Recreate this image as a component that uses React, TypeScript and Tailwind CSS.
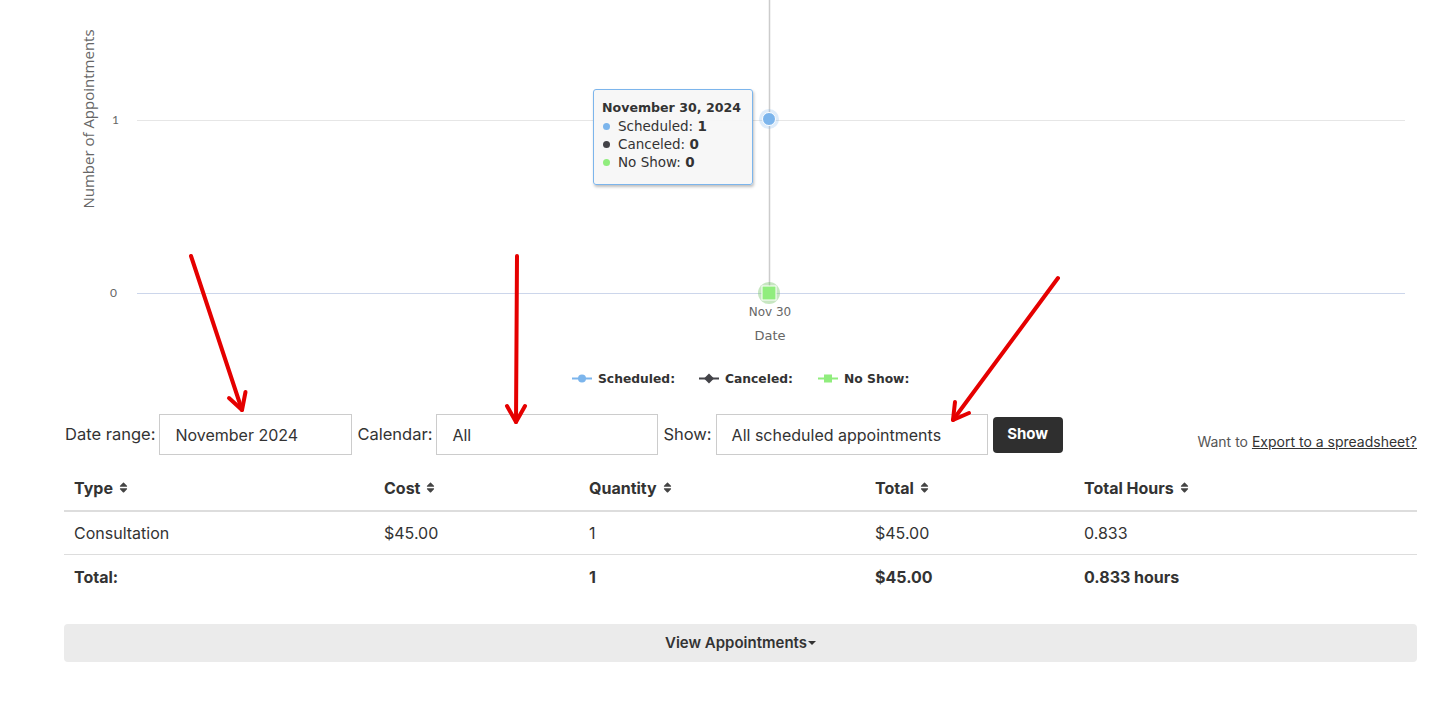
import { FaSort } from 'react-icons/fa';

const chartFont = { fontFamily: '"DejaVu Sans", sans-serif' };

function SortHead({ label }: { label: string }) {
  return (
    <span className="inline-flex items-center gap-[4px]">
      {label}
      <FaSort className="w-[13px] h-[13px] text-[#444]" />
    </span>
  );
}

function Chart() {
  return (
    <div className="relative h-[414px]">
      <svg width="1438" height="414" className="block">
        {/* grid */}
        <line x1="137" y1="120.5" x2="1405" y2="120.5" stroke="#e6e6e6" strokeWidth="1" />
        <line x1="137" y1="293.5" x2="1405" y2="293.5" stroke="#ccd6eb" strokeWidth="1" />
        {/* crosshair */}
        <line x1="769.5" y1="0" x2="769.5" y2="293" stroke="#cccccc" strokeWidth="1.5" />

        {/* y axis */}
        <text x="112" y="124" fontSize="12" fill="#666" fontFamily="Lato, sans-serif">1</text>
        <text x="110" y="297" fontSize="12" fill="#666" fontFamily="Lato, sans-serif">0</text>
        <text
          x="90"
          y="119"
          transform="rotate(-90 90 119)"
          textAnchor="middle"
          dominantBaseline="middle"
          fontSize="15"
          fill="#666"
          fontFamily='"Open Sans", sans-serif'
        >
          Number of Appointments
        </text>

        {/* points */}
        <circle cx="769" cy="119" r="10" fill="#7cb5ec" fillOpacity="0.25" />
        <circle cx="769" cy="119" r="6.5" fill="#7cb5ec" stroke="#fff" strokeWidth="1" />
        <circle cx="769" cy="293" r="11" fill="#90ed7d" fillOpacity="0.3" />
        <circle cx="769" cy="293" r="11" fill="#4a7a44" fillOpacity="0.15" />
        <rect x="762" y="286" width="14" height="14" fill="#90ed7d" stroke="#fff" strokeWidth="1" />

        {/* x axis */}
        <text x="770" y="316" textAnchor="middle" fontSize="12" fill="#666" style={chartFont}>Nov 30</text>
        <text x="770" y="340" textAnchor="middle" fontSize="13" fill="#666" style={chartFont}>Date</text>

        {/* legend */}
        <g style={chartFont} fontSize="12.3" fontWeight="bold" fill="#333">
          <line x1="572" y1="378.5" x2="592" y2="378.5" stroke="#7cb5ec" strokeWidth="2" />
          <circle cx="582" cy="378.5" r="4" fill="#7cb5ec" />
          <text x="598" y="383">Scheduled:</text>

          <line x1="699" y1="378.5" x2="719" y2="378.5" stroke="#434348" strokeWidth="2" />
          <path d="M709 373.5 L714 378.5 L709 383.5 L704 378.5 Z" fill="#434348" />
          <text x="725" y="383">Canceled:</text>

          <line x1="818" y1="378.5" x2="838" y2="378.5" stroke="#90ed7d" strokeWidth="2" />
          <rect x="824" y="374.5" width="8" height="8" fill="#90ed7d" />
          <text x="844" y="383">No Show:</text>
        </g>
      </svg>

      {/* tooltip */}
      <div
        className="absolute left-[593px] top-[89px] w-[160px] h-[96px] whitespace-nowrap bg-[#f7f7f7]/95 border border-[#7cb5ec] rounded-[3px] shadow-[1px_2px_3px_rgba(0,0,0,0.25)] px-[8px] pt-[9px] text-[13.5px] leading-[18px] text-[#333]"
        style={chartFont}
      >
        <div className="font-bold text-[12.6px]">November 30, 2024</div>
        <div className="flex items-center gap-[8px] pl-[1px]">
          <span className="w-[7px] h-[7px] rounded-full bg-[#7cb5ec]" />
          <span>
            Scheduled: <b>1</b>
          </span>
        </div>
        <div className="flex items-center gap-[8px] pl-[1px]">
          <span className="w-[7px] h-[7px] rounded-full bg-[#434348]" />
          <span>
            Canceled: <b>0</b>
          </span>
        </div>
        <div className="flex items-center gap-[8px] pl-[1px]">
          <span className="w-[7px] h-[7px] rounded-full bg-[#90ed7d]" />
          <span>
            No Show: <b>0</b>
          </span>
        </div>
      </div>
    </div>
  );
}

export default function App() {
  return (
    <div className="relative min-h-screen bg-white text-[#333]" style={{ fontFamily: 'Inter, "Liberation Sans", sans-serif' }}>
      <Chart />

      <div className="pl-[64px] pr-[21px]">
        {/* Filters */}
        <div className="flex items-center h-[41px] text-[16px]">
          <span className="ml-[1px] mr-[4px] text-[16.5px]">Date range:</span>
          <div className="w-[193px] h-[41px] border border-[#cccccc] flex items-center px-[15px]">November 2024</div>
          <span className="ml-[5px] mr-[4px] text-[16.5px]">Calendar:</span>
          <div className="w-[222px] h-[41px] border border-[#cccccc] flex items-center px-[15px]">All</div>
          <span className="ml-[5px] mr-[4px] text-[16.5px]">Show:</span>
          <div className="w-[272px] h-[41px] border border-[#cccccc] flex items-center px-[15px]">All scheduled appointments</div>
          <button className="ml-[5px] w-[70px] h-[36px] bg-[#2f2f2f] text-white font-bold text-[15px] rounded-[4px]">Show</button>
          <div className="ml-auto self-end pb-[3px] text-[14px] text-[#555]">
            Want to <span className="underline text-[#333]">Export to a spreadsheet?</span>
          </div>
        </div>

        {/* Summary table */}
        <table className="w-full mt-[10px] text-[16px] text-left border-collapse">
          <thead>
            <tr className="h-[46px] border-b-2 border-[#dddddd] font-bold">
              <th className="w-[310px] px-[10px] font-bold"><SortHead label="Type" /></th>
              <th className="w-[205px] px-[10px] font-bold"><SortHead label="Cost" /></th>
              <th className="w-[286px] px-[10px] font-bold"><SortHead label="Quantity" /></th>
              <th className="w-[209px] px-[10px] font-bold"><SortHead label="Total" /></th>
              <th className="px-[10px] font-bold"><SortHead label="Total Hours" /></th>
            </tr>
          </thead>
          <tbody>
            <tr className="h-[43px] border-b border-[#dddddd]">
              <td className="px-[10px]">Consultation</td>
              <td className="px-[10px]">$45.00</td>
              <td className="px-[10px]">1</td>
              <td className="px-[10px]">$45.00</td>
              <td className="px-[10px]">0.833</td>
            </tr>
            <tr className="h-[45px] font-bold">
              <td className="px-[10px]">Total:</td>
              <td className="px-[10px]"></td>
              <td className="px-[10px]">1</td>
              <td className="px-[10px]">$45.00</td>
              <td className="px-[10px]">0.833 hours</td>
            </tr>
          </tbody>
        </table>

        <button className="mt-[25px] w-full h-[38px] bg-[#ebebeb] rounded-[4px] text-[15px] font-semibold text-[#333] flex items-center justify-center">
          View Appointments
          <span className="ml-[1px] w-0 h-0 border-l-[4px] border-r-[4px] border-t-[4px] border-l-transparent border-r-transparent border-t-[#333]" />
        </button>
      </div>

      {/* red annotation arrows */}
      <svg className="absolute left-0 top-0 pointer-events-none" width="1438" height="726">
        <g stroke="#e50000" strokeWidth="4" strokeLinecap="round" strokeLinejoin="round" fill="none">
          <line x1="191" y1="256" x2="242" y2="410" />
          <polyline points="229,398 242,410 245.5,392" />
          <line x1="517" y1="256" x2="516" y2="422" />
          <polyline points="507,406 516,422 525,406" />
          <line x1="1058" y1="278" x2="953" y2="420" />
          <polyline points="955,402 953,420 969,413" />
        </g>
      </svg>
    </div>
  );
}
